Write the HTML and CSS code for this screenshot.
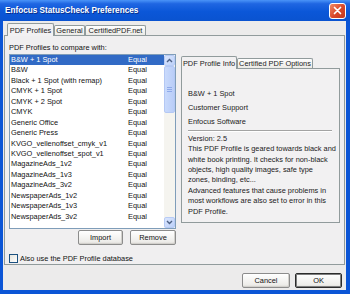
FILE: index.html
```html
<!DOCTYPE html>
<html>
<head>
    <title>Enfocus StatusCheck Preferences</title>
    <link rel="stylesheet" href="styles.css">
</head>
<body>
<div class="window">
    <div class="titlebar">
        <span class="title">Enfocus StatusCheck Preferences</span>
        <span class="close">
            <svg width="9" height="9" viewBox="0 0 9 9"><path d="M1.5 1.5 L7.5 7.5 M7.5 1.5 L1.5 7.5" stroke="#fff" stroke-width="1.7" stroke-linecap="round"/></svg>
        </span>
    </div>

    <div class="client">
        <div class="tabs">
            <div class="tab active t-profiles">PDF Profiles</div>
            <div class="tab t-general">General</div>
            <div class="tab t-cert">CertifiedPDF.net</div>
        </div>

        <div class="page">
            <div class="cols">
                <div class="left">
                    <div class="caption">PDF Profiles to compare with:</div>
                    <div class="listbox">
                        <div class="rows">
                            <div class="row selected"><span class="name">B&amp;W + 1 Spot</span><span>Equal</span></div>
                            <div class="row"><span class="name">B&amp;W</span><span>Equal</span></div>
                            <div class="row"><span class="name">Black + 1 Spot (with remap)</span><span>Equal</span></div>
                            <div class="row"><span class="name">CMYK + 1 Spot</span><span>Equal</span></div>
                            <div class="row"><span class="name">CMYK + 2 Spot</span><span>Equal</span></div>
                            <div class="row"><span class="name">CMYK</span><span>Equal</span></div>
                            <div class="row"><span class="name">Generic Office</span><span>Equal</span></div>
                            <div class="row"><span class="name">Generic Press</span><span>Equal</span></div>
                            <div class="row"><span class="name">KVGO_vellenoffset_cmyk_v1</span><span>Equal</span></div>
                            <div class="row"><span class="name">KVGO_vellenoffset_spot_v1</span><span>Equal</span></div>
                            <div class="row"><span class="name">MagazineAds_1v2</span><span>Equal</span></div>
                            <div class="row"><span class="name">MagazineAds_1v3</span><span>Equal</span></div>
                            <div class="row"><span class="name">MagazineAds_3v2</span><span>Equal</span></div>
                            <div class="row"><span class="name">NewspaperAds_1v2</span><span>Equal</span></div>
                            <div class="row"><span class="name">NewspaperAds_1v3</span><span>Equal</span></div>
                            <div class="row"><span class="name">NewspaperAds_3v2</span><span>Equal</span></div>
                        </div>
                        <div class="scrollbar">
                            <div class="sb-btn">
                                <svg width="7" height="5" viewBox="0 0 7 5"><path d="M1 4 L3.5 1.5 L6 4" fill="none" stroke="#4d6185" stroke-width="1.4"/></svg>
                            </div>
                            <div class="sb-track">
                                <div class="sb-thumb"><span></span><span></span><span></span></div>
                            </div>
                            <div class="sb-btn">
                                <svg width="7" height="5" viewBox="0 0 7 5"><path d="M1 1 L3.5 3.5 L6 1" fill="none" stroke="#4d6185" stroke-width="1.4"/></svg>
                            </div>
                        </div>
                    </div>
                    <div class="actions">
                        <button class="btn btn-import">Import</button>
                        <button class="btn btn-remove">Remove</button>
                    </div>
                </div>

                <div class="right">
                    <div class="tabs inner">
                        <div class="tab active t-info">PDF Profile Info</div>
                        <div class="tab t-options">Certified PDF Options</div>
                    </div>
                    <div class="info">
                        <div class="field">B&amp;W + 1 Spot</div>
                        <div class="field">Customer Support</div>
                        <div class="field">Enfocus Software</div>
                        <div class="sep"></div>
                        <div class="desc">Version: 2.5<br>This PDF Profile is geared towards black and<br>white book printing. It checks for non-black<br>objects, high quality images, safe type<br>zones, binding, etc...<br>Advanced features that cause problems in<br>most workflows are also set to error in this<br>PDF Profile.</div>
                    </div>
                </div>
            </div>

            <div class="check"><span class="box"></span>Also use the PDF Profile database</div>
        </div>

        <div class="footer">
            <button class="btn btn-cancel">Cancel</button>
            <button class="btn btn-ok">OK</button>
        </div>
    </div>
</div>
</body>
</html>
```

FILE: styles.css
```css
body {
    margin: 0;
    width: 350px;
    height: 294px;
    overflow: hidden;
    font-family: "Liberation Sans", Arial, sans-serif;
    font-size: 7.4px;
    color: #111;
}

.window {
    height: 294px;
    display: flex;
    flex-direction: column;
    background: #0b55d6;
}

/* title bar */
.titlebar {
    height: 21px;
    flex: none;
    display: flex;
    align-items: center;
    justify-content: space-between;
    padding: 0 4px 0 5px;
    background: linear-gradient(#4a94f8 0, #1f66e2 18%, #0b57d8 55%, #0a53d0 100%);
}

.title {
    color: #fff;
    font-weight: bold;
    font-size: 8.2px;
    text-shadow: 1px 1px 0 #0b2f8c;
}

.close {
    width: 17px;
    height: 16px;
    box-sizing: border-box;
    border: 1px solid #fff;
    border-radius: 3px;
    background: linear-gradient(135deg, #f08a66, #d9472a 55%, #c33a1f);
    display: flex;
    align-items: center;
    justify-content: center;
}

/* dialog area */
.client {
    flex: 1;
    margin: 0 4px 4px 3px;
    background: #ecebeb;
    display: flex;
    flex-direction: column;
}

/* tab strips */
.tabs {
    height: 14px;
    flex: none;
    display: flex;
    align-items: flex-end;
    padding-left: 4px;
    position: relative;
    z-index: 1;
}

.tab {
    height: 10px;
    box-sizing: border-box;
    border: 1px solid #919b9c;
    border-bottom: none;
    border-radius: 2px 2px 0 0;
    background: linear-gradient(#fefefe, #ebeae6);
    display: flex;
    align-items: center;
    justify-content: center;
    white-space: nowrap;
    color: #222;
}

.tab.active {
    height: 13px;
    margin-bottom: -1px;
    background: #f2f1f2;
}

.t-profiles { width: 47px; }
.t-general { width: 31px; }
.t-cert { width: 61px; }

.tabs.inner { padding-left: 0; }
.t-info { width: 56px; }
.t-options { width: 76px; }

/* main tab page */
.page {
    height: 230px;
    flex: none;
    box-sizing: border-box;
    margin: 0 1px;
    border: 1px solid #919b9c;
    background: #f0eff0;
    padding: 6px 4px 0 4px;
}

.cols {
    display: flex;
    gap: 5px;
}

.left { width: 167px; }

.caption {
    height: 12px;
    line-height: 12px;
}

.listbox {
    height: 175px;
    box-sizing: border-box;
    border: 1px solid #7f9db9;
    background: #fff;
    display: flex;
}

.rows { flex: 1; }

.row {
    height: 10.45px;
    line-height: 10.45px;
    display: flex;
    padding-left: 1px;
    white-space: nowrap;
}

.row .name { width: 117px; }

.row.selected {
    background: #316ac5;
    color: #fff;
}

.scrollbar {
    width: 11px;
    display: flex;
    flex-direction: column;
    background: #f5f4ef;
}

.sb-btn {
    height: 11px;
    flex: none;
    box-sizing: border-box;
    border: 1px solid #b7cbf5;
    border-radius: 2px;
    background: linear-gradient(135deg, #dbe6fd, #bcd0f9);
    display: flex;
    align-items: center;
    justify-content: center;
}

.sb-track { flex: 1; }

.sb-thumb {
    height: 47px;
    box-sizing: border-box;
    border: 1px solid #b4c8f4;
    border-radius: 2px;
    background: linear-gradient(90deg, #c9dafc, #b9cdf8);
    display: flex;
    flex-direction: column;
    align-items: center;
    justify-content: center;
    gap: 1px;
}

.sb-thumb span {
    width: 5px;
    height: 1px;
    background: #8faaea;
}

.actions {
    display: flex;
    justify-content: flex-end;
    gap: 7px;
    margin-top: 1px;
}

/* buttons */
.btn {
    height: 15px;
    box-sizing: border-box;
    padding: 0;
    font-family: inherit;
    font-size: 7.4px;
    color: #111;
    border: 1px solid #8c8c8c;
    border-radius: 2px;
    background: linear-gradient(#ffffff, #eeedea 80%, #dedcd8);
    box-shadow: inset -1px -1px 0 #d2d0cc;
}

.btn-import { width: 45px; }
.btn-remove { width: 46px; }
.btn-cancel { width: 48px; }
.btn-ok {
    width: 47px;
    border-color: #2b2b2b;
    box-shadow: inset 0 0 0 1px #7d7d7d;
}

/* info panel */
.right {
    width: 159px;
    margin-top: 12px;
}

.info {
    height: 155px;
    box-sizing: border-box;
    border: 1px solid #919b9c;
    background: #f2f1f2;
    padding: 20px 7px 0 6px;
    line-height: 10.4px;
    color: #1a1a1a;
}

.field { margin-bottom: 3.4px; }

.sep {
    height: 0;
    margin: 0.5px 0 1.4px;
    border-top: 1px solid #a3a3a3;
    border-bottom: 1px solid #fff;
}

.desc { white-space: nowrap; }

/* checkbox */
.check {
    display: flex;
    align-items: center;
    gap: 2px;
    height: 11px;
    margin-top: 8px;
    white-space: nowrap;
}

.box {
    width: 9px;
    height: 9px;
    box-sizing: border-box;
    border: 1px solid #1c5180;
    background: linear-gradient(135deg, #e4e3dc, #ffffff);
}

/* bottom buttons */
.footer {
    flex: 1;
    display: flex;
    justify-content: flex-end;
    align-items: flex-start;
    gap: 5px;
    padding: 8px 4px 0 0;
}
```
